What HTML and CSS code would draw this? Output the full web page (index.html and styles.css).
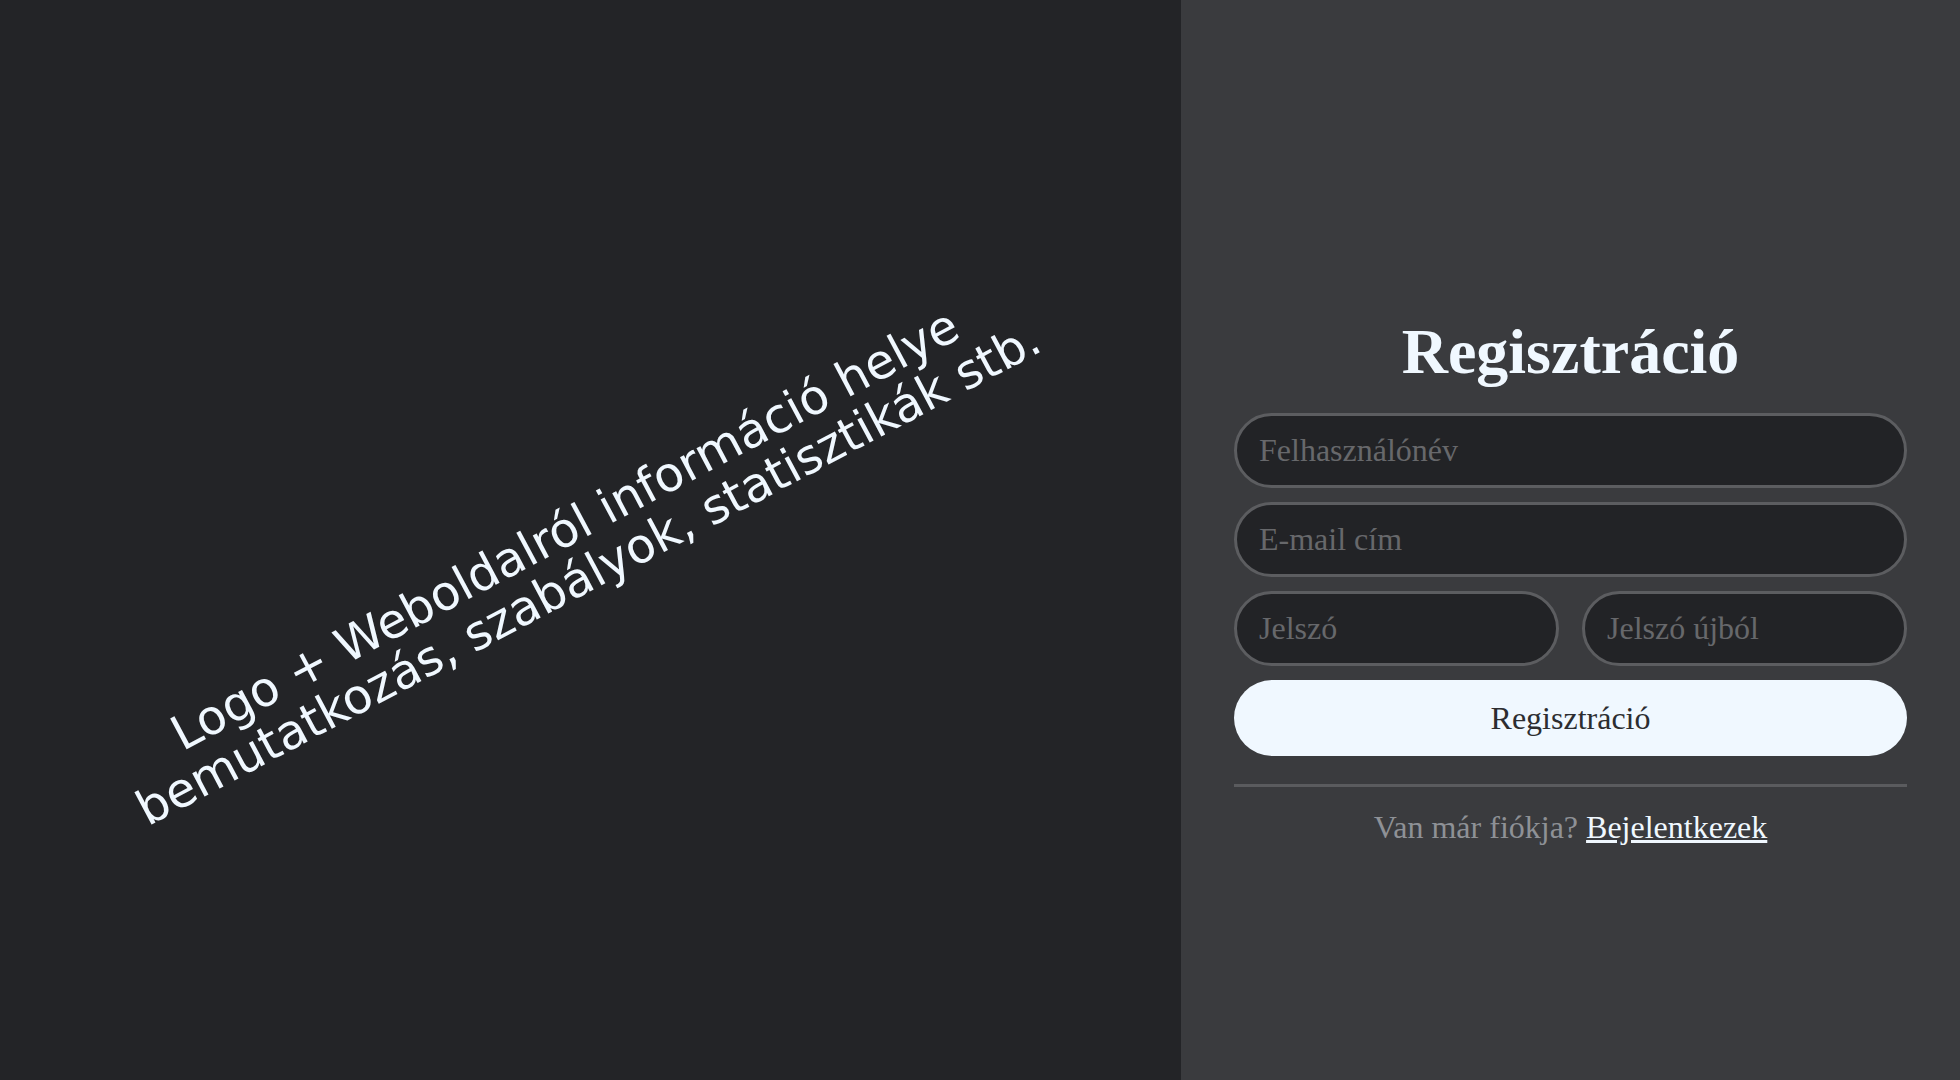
FILE: index.html
```html
<!DOCTYPE html>
<html lang="hu">
<head>
<meta charset="utf-8">
<title>Regisztráció</title>
<link rel="stylesheet" href="styles.css">
</head>
<body>
<div class="page">
  <section class="info">
    <p class="info-text">Logo + Weboldalról információ helye<br>bemutatkozás, szabályok, statisztikák stb.</p>
  </section>
  <section class="auth">
    <form class="form">
      <h1 class="title">Regisztráció</h1>
      <input class="field" type="text" placeholder="Felhasználónév">
      <input class="field" type="email" placeholder="E-mail cím">
      <div class="row">
        <input class="field" type="password" placeholder="Jelszó">
        <input class="field" type="password" placeholder="Jelszó újból">
      </div>
      <button class="submit" type="button">Regisztráció</button>
      <div class="divider"></div>
      <p class="switch">Van már fiókja? <a class="switch-link" href="#">Bejelentkezek</a></p>
    </form>
  </section>
</div>
</body>
</html>
```

FILE: styles.css
```css
html, body {
  margin: 0;
  padding: 0;
  height: 100%;
}

body {
  font-family: "Liberation Serif", "Times New Roman", serif;
  background: #3a3b3e;
}

.page {
  display: flex;
  width: 1960px;
  height: 1080px;
  overflow: hidden;
}

.info {
  width: 1181px;
  flex: 0 0 1181px;
  background: #232427;
  display: flex;
  align-items: center;
  justify-content: center;
}

.info-text {
  margin: 0;
  font-family: "DejaVu Sans", sans-serif;
  font-size: 48px;
  line-height: 1.04;
  color: #f0f8ff;
  text-align: center;
  white-space: nowrap;
  transform: translate(-14px, 12px) rotate(-28deg);
}

.auth {
  flex: 1;
  background: #3a3b3e;
  padding-top: 315px;
  box-sizing: border-box;
}

.form {
  width: 673px;
  margin: 0 auto;
  display: flex;
  flex-direction: column;
}

.title {
  margin: 0 0 24px;
  font-size: 64px;
  font-weight: bold;
  color: #f0f8ff;
  text-align: center;
  line-height: normal;
}

.field {
  box-sizing: border-box;
  height: 75px;
  width: 100%;
  margin: 0 0 14px;
  padding: 0 22px;
  border: 3px solid #5c5d60;
  border-radius: 38px;
  background: #222326;
  color: #d8dde2;
  font-family: "Liberation Serif", "Times New Roman", serif;
  font-size: 32px;
  outline: none;
}

.field::placeholder {
  color: #67686b;
}

.row {
  display: grid;
  grid-template-columns: 1fr 1fr;
  column-gap: 23px;
}

.submit {
  height: 76px;
  border: none;
  border-radius: 38px;
  background: #f0f8ff;
  color: #2c2d30;
  font-family: "Liberation Serif", "Times New Roman", serif;
  font-size: 32px;
  cursor: pointer;
}

.divider {
  height: 3px;
  margin-top: 28px;
  background: #5a5b5e;
}

.switch {
  margin: 22px 0 0;
  font-size: 32px;
  color: #8e9196;
  text-align: center;
}

.switch-link {
  color: #f0f8ff;
  text-decoration: underline;
}
```
